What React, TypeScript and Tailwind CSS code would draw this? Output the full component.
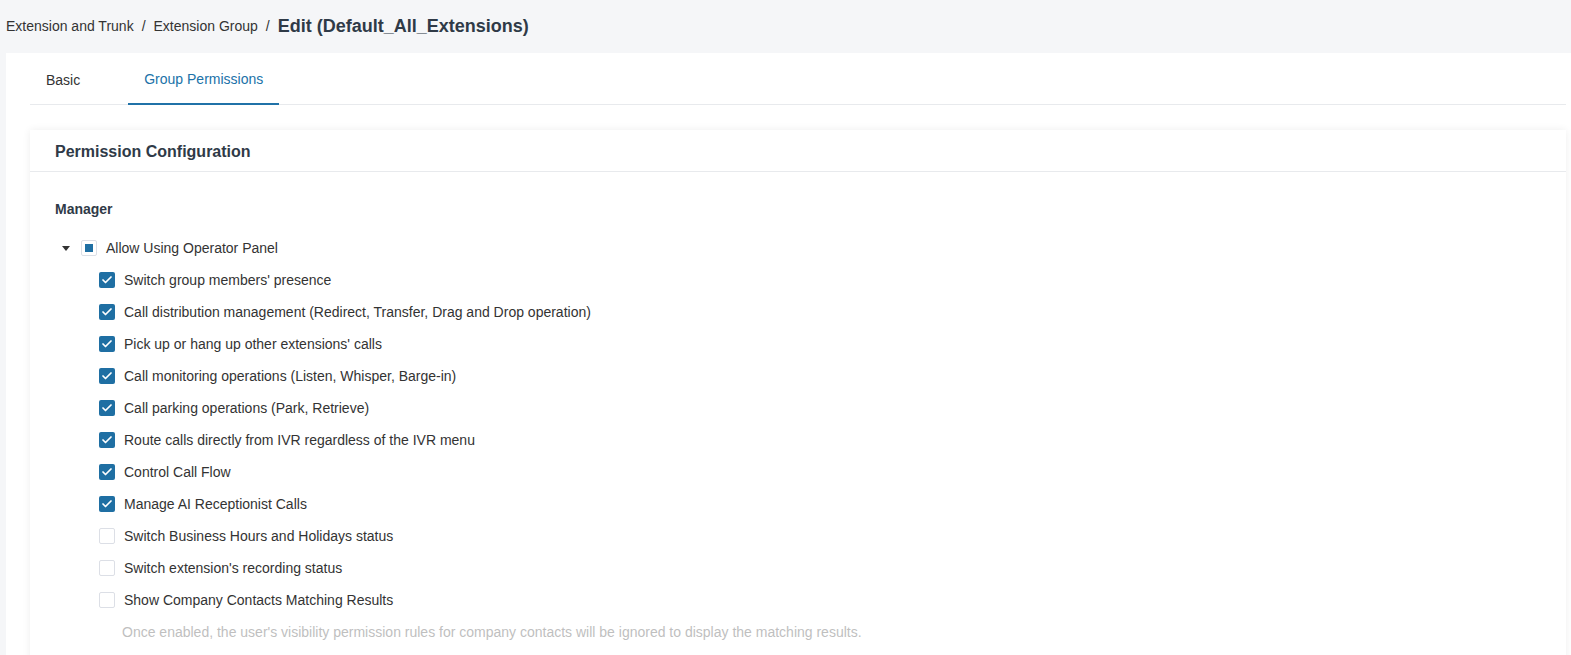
import { Check } from "lucide-react";

const items: { label: string; checked: boolean }[] = [
  { label: "Switch group members' presence", checked: true },
  { label: "Call distribution management (Redirect, Transfer, Drag and Drop operation)", checked: true },
  { label: "Pick up or hang up other extensions' calls", checked: true },
  { label: "Call monitoring operations (Listen, Whisper, Barge-in)", checked: true },
  { label: "Call parking operations (Park, Retrieve)", checked: true },
  { label: "Route calls directly from IVR regardless of the IVR menu", checked: true },
  { label: "Control Call Flow", checked: true },
  { label: "Manage AI Receptionist Calls", checked: true },
  { label: "Switch Business Hours and Holidays status", checked: false },
  { label: "Switch extension's recording status", checked: false },
  { label: "Show Company Contacts Matching Results", checked: false },
];

function Checkbox({ checked }: { checked: boolean }) {
  if (checked) {
    return (
      <span className="w-4 h-4 rounded-[2px] bg-[#1f6fa3] flex items-center justify-center shrink-0">
        <Check className="w-3 h-3 text-white" strokeWidth={3.5} />
      </span>
    );
  }
  return <span className="w-4 h-4 rounded-[2px] border border-[#dcdfe6] bg-white shrink-0" />;
}

export default function App() {
  return (
    <div
      className="w-full h-screen overflow-hidden bg-[#f5f6f8] text-[14px] text-[#333]"
      style={{ fontFamily: '"Liberation Sans", Arial, sans-serif' }}
    >
      <div className="h-[53px] flex items-start pt-[14px] px-[6px] leading-[24px]">
        <span className="text-[#333]">Extension and Trunk</span>
        <span className="mx-[8px] text-[#333]">/</span>
        <span className="text-[#333]">Extension Group</span>
        <span className="mx-[8px] text-[#333]">/</span>
        <span className="text-[18px] font-bold text-[#2f3a47]">Edit (Default_All_Extensions)</span>
      </div>

      <div className="ml-[6px] bg-white pl-[24px] pr-[5px] h-full">
        <div className="flex h-[52px] border-b border-[#e8eaed]">
          <div className="px-4 pt-[3px] flex items-center text-[#333]">Basic</div>
          <div className="ml-8 px-4 pt-[3px] flex items-center text-[#2072a8] border-b-2 border-[#2072a8] -mb-px">
            Group Permissions
          </div>
        </div>

        <div className="mt-[25px] bg-white shadow-[0_0_8px_rgba(0,0,0,0.07)]">
          <div className="h-[42px] border-b border-[#e8eaed] pl-[25px] pt-[3px] flex items-center text-[16px] font-bold text-[#2f3a47]">
            Permission Configuration
          </div>
          <div className="pl-[25px] pt-[27px] pb-6">
            <div className="leading-[20px] font-bold text-[#2f3a47]">Manager</div>
            <div className="mt-[13px]">
              <div className="h-8 flex items-center pl-[3px]">
                <span className="w-4 h-4 flex items-center justify-center">
                  <svg width="8" height="5" viewBox="0 0 8 5">
                    <path d="M0 0h8L4 5z" fill="#333" />
                  </svg>
                </span>
                <span className="ml-[7px] w-4 h-4 rounded-[2px] border border-[#dcdfe6] bg-white flex items-center justify-center">
                  <span className="w-2 h-2 bg-[#1f6fa3]" />
                </span>
                <span className="ml-[9px]">Allow Using Operator Panel</span>
              </div>
              {items.map((it) => (
                <div key={it.label} className="h-8 flex items-center pl-[44px]">
                  <Checkbox checked={it.checked} />
                  <span className="ml-[9px]">{it.label}</span>
                </div>
              ))}
              <div className="h-8 flex items-center pl-[67px] text-[#bfbfbf]">
                Once enabled, the user's visibility permission rules for company contacts will be ignored to display the matching results.
              </div>
            </div>
          </div>
        </div>
      </div>
    </div>
  );
}
